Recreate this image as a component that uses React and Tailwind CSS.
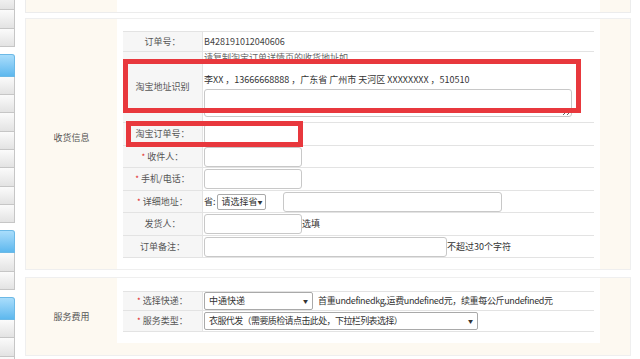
import React from "react";

/* ----------------------------------
   SIDEBAR
-----------------------------------*/
function SideBtn({ blue, h }) {
  if (blue) {
    return (
      <div
        className={`${h} shrink-0 border border-l-0 border-[#6cb9e6] rounded-tr-[3px] bg-linear-to-b from-[#a9ddfb] to-[#5db8ee]`}
      />
    );
  }
  return (
    <div
      className={`${h} shrink-0 border-b border-r border-[#c6c6c6] bg-linear-to-b from-[#fbfbfb] to-[#e3e3e3]`}
    />
  );
}

function Sidebar() {
  return (
    <div className="w-[15px] shrink-0 flex flex-col">
      <div className="flex flex-col -mt-[8px]">
        <SideBtn h="h-[18px]" />
        <SideBtn h="h-[19px]" />
        <SideBtn h="h-[18px]" />
      </div>
      <div className="flex flex-col mt-[7px]">
        <SideBtn blue h="h-[23px]" />
        <SideBtn h="h-[18px]" />
        <SideBtn h="h-[18px]" />
        <SideBtn h="h-[19px]" />
        <SideBtn h="h-[18px]" />
        <SideBtn h="h-[18px]" />
        <SideBtn h="h-[19px]" />
        <SideBtn h="h-[18px]" />
        <SideBtn h="h-[18px]" />
      </div>
      <div className="flex flex-col mt-[7px]">
        <SideBtn blue h="h-[23px]" />
        <SideBtn h="h-[19px]" />
        <SideBtn h="h-[18px]" />
      </div>
      <div className="flex flex-col mt-[7px]">
        <SideBtn blue h="h-[23px]" />
        <SideBtn h="h-[18px]" />
        <SideBtn h="h-[19px]" />
        <SideBtn h="h-[18px]" />
      </div>
    </div>
  );
}

/* ----------------------------------
   TABLE PIECES
-----------------------------------*/
function Row({ label, req, h, children, first }) {
  return (
    <div
      className={`flex ${h} border-b border-[#e3e3e3] ${first ? "border-t" : ""}`}
    >
      <div className="w-[80px] shrink-0 bg-[#f6f6f6] border-r border-[#e3e3e3] flex items-center justify-center text-[#555]">
        {req && <span className="text-[#e02020] mr-[2px] text-[8px]">*</span>}
        {label}
      </div>
      <div className="flex-1 flex items-center pl-[1px] text-[#333] min-w-0">
        {children}
      </div>
    </div>
  );
}

function FakeSelect({ text, w, h, tight }) {
  return (
    <div
      className={`${w} ${h} shrink-0 border border-[#a9a9a9] rounded-[2px] bg-white flex items-center justify-between pl-[4px] pr-[4px] text-[#333] whitespace-nowrap overflow-hidden`}
    >
      <span className={tight ? "tracking-[-0.6px]" : ""}>{text}</span>
      <span className="text-[5px] text-[#333]">▼</span>
    </div>
  );
}

function TextBox({ w }) {
  return (
    <input
      className={`${w} h-[20px] shrink-0 border border-[#c8c8c8] rounded-[3px] bg-white outline-none`}
    />
  );
}

/* ----------------------------------
   SECTION
-----------------------------------*/
function Section({ label, pad, labelPad, children }) {
  return (
    <div className="flex border border-[#efefef] bg-[#fdf9f1]">
      <div
        className={`w-[91px] shrink-0 flex items-center justify-center text-[#555] ${labelPad}`}
      >
        {label}
      </div>
      <div className={`flex-1 pr-[30px] ${pad}`}>
        <div className="bg-white h-full px-[6px]">{children}</div>
      </div>
    </div>
  );
}

export default function App() {
  return (
    <div className="relative w-[640px] h-[359px] overflow-hidden bg-white flex text-[9px] leading-[12px] font-['Noto_Sans_CJK_SC',sans-serif]">
      <Sidebar />

      <div className="ml-[10px] w-[606px] shrink-0 flex flex-col">
        {/* TOP (cut off) */}
        <div className="-mt-[28px] h-[41px] shrink-0 flex border border-[#ececec] bg-[#fdf9f1]">
          <div className="w-[91px] shrink-0" />
          <div className="flex-1 pr-[30px]">
            <div className="bg-white h-full" />
          </div>
        </div>

        {/* 收货信息 */}
        <div className="mt-[5px]">
          <Section label="收货信息" pad="" labelPad="pb-[13px]">
            <div className="pt-[12px] pb-[11px]">
              <div className="flex flex-col">
                <Row first label="订单号：" h="h-[21px]">
                  <span className="text-[#444]">B428191012040606</span>
                </Row>
                <Row label="淘宝地址识别" h="h-[71px]">
                  <div className="self-stretch flex flex-col overflow-hidden">
                    <div className="h-[12px] mt-0 text-[#666] whitespace-nowrap">
                      请复制淘宝订单详情页的收货地址如
                    </div>
                    <div className="h-[12px] mt-[10px] whitespace-nowrap">
                      李XX ，13666668888 ，广东省 广州市 天河区 XXXXXXXX ，510510
                    </div>
                    <textarea className="mt-[3px] w-[368px] h-[28px] border border-[#c8c8c8] rounded-[3px] bg-white outline-none" />
                  </div>
                </Row>
                <Row label="淘宝订单号：" h="h-[23px]">
                  <TextBox w="w-[98px]" />
                </Row>
                <Row req label="收件人：" h="h-[22px]">
                  <TextBox w="w-[98px]" />
                </Row>
                <Row req label="手机/电话：" h="h-[23px]">
                  <TextBox w="w-[98px]" />
                </Row>
                <Row req label="详细地址：" h="h-[22px]">
                  <span className="mr-[1px]">省:</span>
                  <FakeSelect text="请选择省" w="w-[49px]" h="h-[16px]" />
                  <input className="ml-[17px] w-[219px] h-[20px] border border-[#c8c8c8] rounded-[3px] bg-white outline-none" />
                </Row>
                <Row label="发货人：" h="h-[23px]">
                  <TextBox w="w-[98px]" />
                  <span>选填</span>
                </Row>
                <Row label="订单备注：" h="h-[22px]">
                  <TextBox w="w-[243px]" />
                  <span>不超过30个字符</span>
                </Row>
              </div>
            </div>
          </Section>
        </div>

        {/* 服务费用 */}
        <div className="mt-[7px]">
          <Section label="服务费用" pad="pb-[12px]" labelPad="">
            <div className="pt-[13px] pb-[11px]">
              <div className="flex flex-col">
                <Row first req label="选择快递：" h="h-[20px]">
                  <FakeSelect text="中通快递" w="w-[109px]" h="h-[18px]" />
                  <span className="ml-[5px] whitespace-nowrap tracking-[-0.35px]">
                    首重undefinedkg,运费undefined元，续重每公斤undefined元
                  </span>
                </Row>
                <Row req label="服务类型：" h="h-[21px]">
                  <FakeSelect
                    tight
                    text="衣服代发（需要质检请点击此处，下拉栏列表选择）"
                    w="w-[274px]"
                    h="h-[18px]"
                  />
                </Row>
              </div>
            </div>
          </Section>
        </div>
      </div>

      {/* annotation boxes */}
      <div className="absolute left-[123px] top-[59px] w-[458px] h-[54px] border-[5px] border-[#e8383d]" />
      <div className="absolute left-[126px] top-[121px] w-[177px] h-[26px] border-[5px] border-[#e8383d]" />
    </div>
  );
}
